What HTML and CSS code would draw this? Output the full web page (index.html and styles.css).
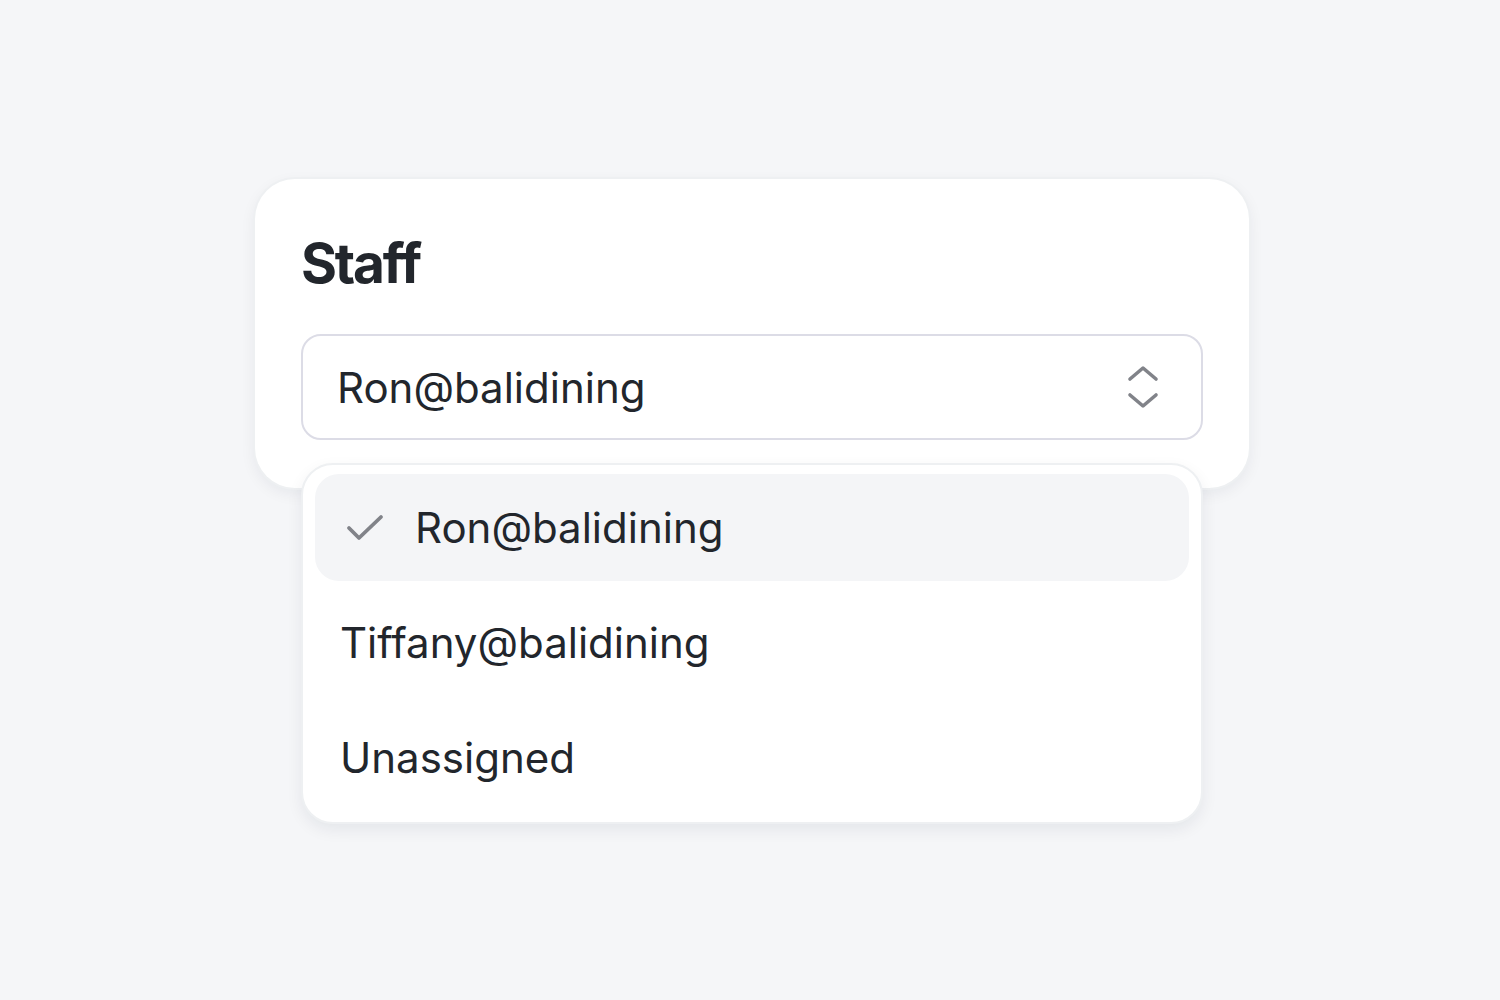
FILE: index.html
```html
<!DOCTYPE html>
<html lang="en">
<head>
    <meta charset="UTF-8">
    <title>Staff</title>
    <link rel="stylesheet" href="styles.css">
</head>
<body>
    <div class="stage">
        <div class="card">
            <h2 class="label">Staff</h2>
            <div class="select">
                <span class="select-value">Ron@balidining</span>
                <svg class="chevrons" width="32" height="48" viewBox="0 0 32 48" fill="none" stroke="currentColor" stroke-width="3.6" stroke-linecap="round" stroke-linejoin="round">
                    <path d="M3 16 L16 5 L29 16"/>
                    <path d="M3 32 L16 43 L29 32"/>
                </svg>
            </div>

            <ul class="menu">
                <li class="option selected">
                    <svg class="check" width="38" height="28" viewBox="0 0 38 28" fill="none" stroke="currentColor" stroke-width="3.8" stroke-linecap="round" stroke-linejoin="round">
                        <path d="M3 14 L13 24 L35 3"/>
                    </svg>
                    <span>Ron@balidining</span>
                </li>
                <li class="option">Tiffany@balidining</li>
                <li class="option">Unassigned</li>
            </ul>
        </div>
    </div>
</body>
</html>
```

FILE: styles.css
```css
body {
    margin: 0;
    background: #f5f6f8;
    font-family: Inter, "Noto Sans", sans-serif;
    font-variant-ligatures: none;
    font-feature-settings: "liga" 0, "calt" 0;
    color: #22262c;
}
.stage {
    height: 1000px;
    padding-top: 179px;
    box-sizing: border-box;
}
.card {
    position: relative;
    width: 994px;
    margin-left: 255px;
    box-sizing: border-box;
    padding: 52px 46px 48px;
    background: #fff;
    border-radius: 40px;
    box-shadow: 0 0 0 2px #eef0f2, 0 5px 16px rgba(20, 30, 50, 0.07);
}
.label {
    margin: 0 0 39px;
    font-size: 55px;
    font-weight: 700;
    line-height: 64px;
    letter-spacing: -2.2px;
}
.select {
    height: 106px;
    box-sizing: border-box;
    border: 2px solid #dcdce6;
    border-radius: 20px;
    display: flex;
    align-items: center;
    justify-content: space-between;
    padding: 0 42px 0 34px;
}
.select-value {
    font-size: 42px;
}
.chevrons {
    color: #818389;
}
.menu {
    position: absolute;
    left: 46px;
    top: 284px;
    width: 902px;
    box-sizing: border-box;
    margin: 0;
    padding: 9px 12px 11px;
    list-style: none;
    background: #fff;
    border: 2px solid #eef0f2;
    border-radius: 32px;
    box-shadow: 0 6px 16px rgba(20, 30, 50, 0.07);
}
.option {
    height: 107px;
    display: flex;
    align-items: center;
    padding-left: 25px;
    margin-bottom: 8px;
    font-size: 42px;
    border-radius: 24px;
}
.option:last-child {
    margin-bottom: 0;
}
.option.selected {
    background: #f4f5f7;
    padding-left: 31px;
}
.check {
    color: #818389;
    margin-right: 31px;
}
```
